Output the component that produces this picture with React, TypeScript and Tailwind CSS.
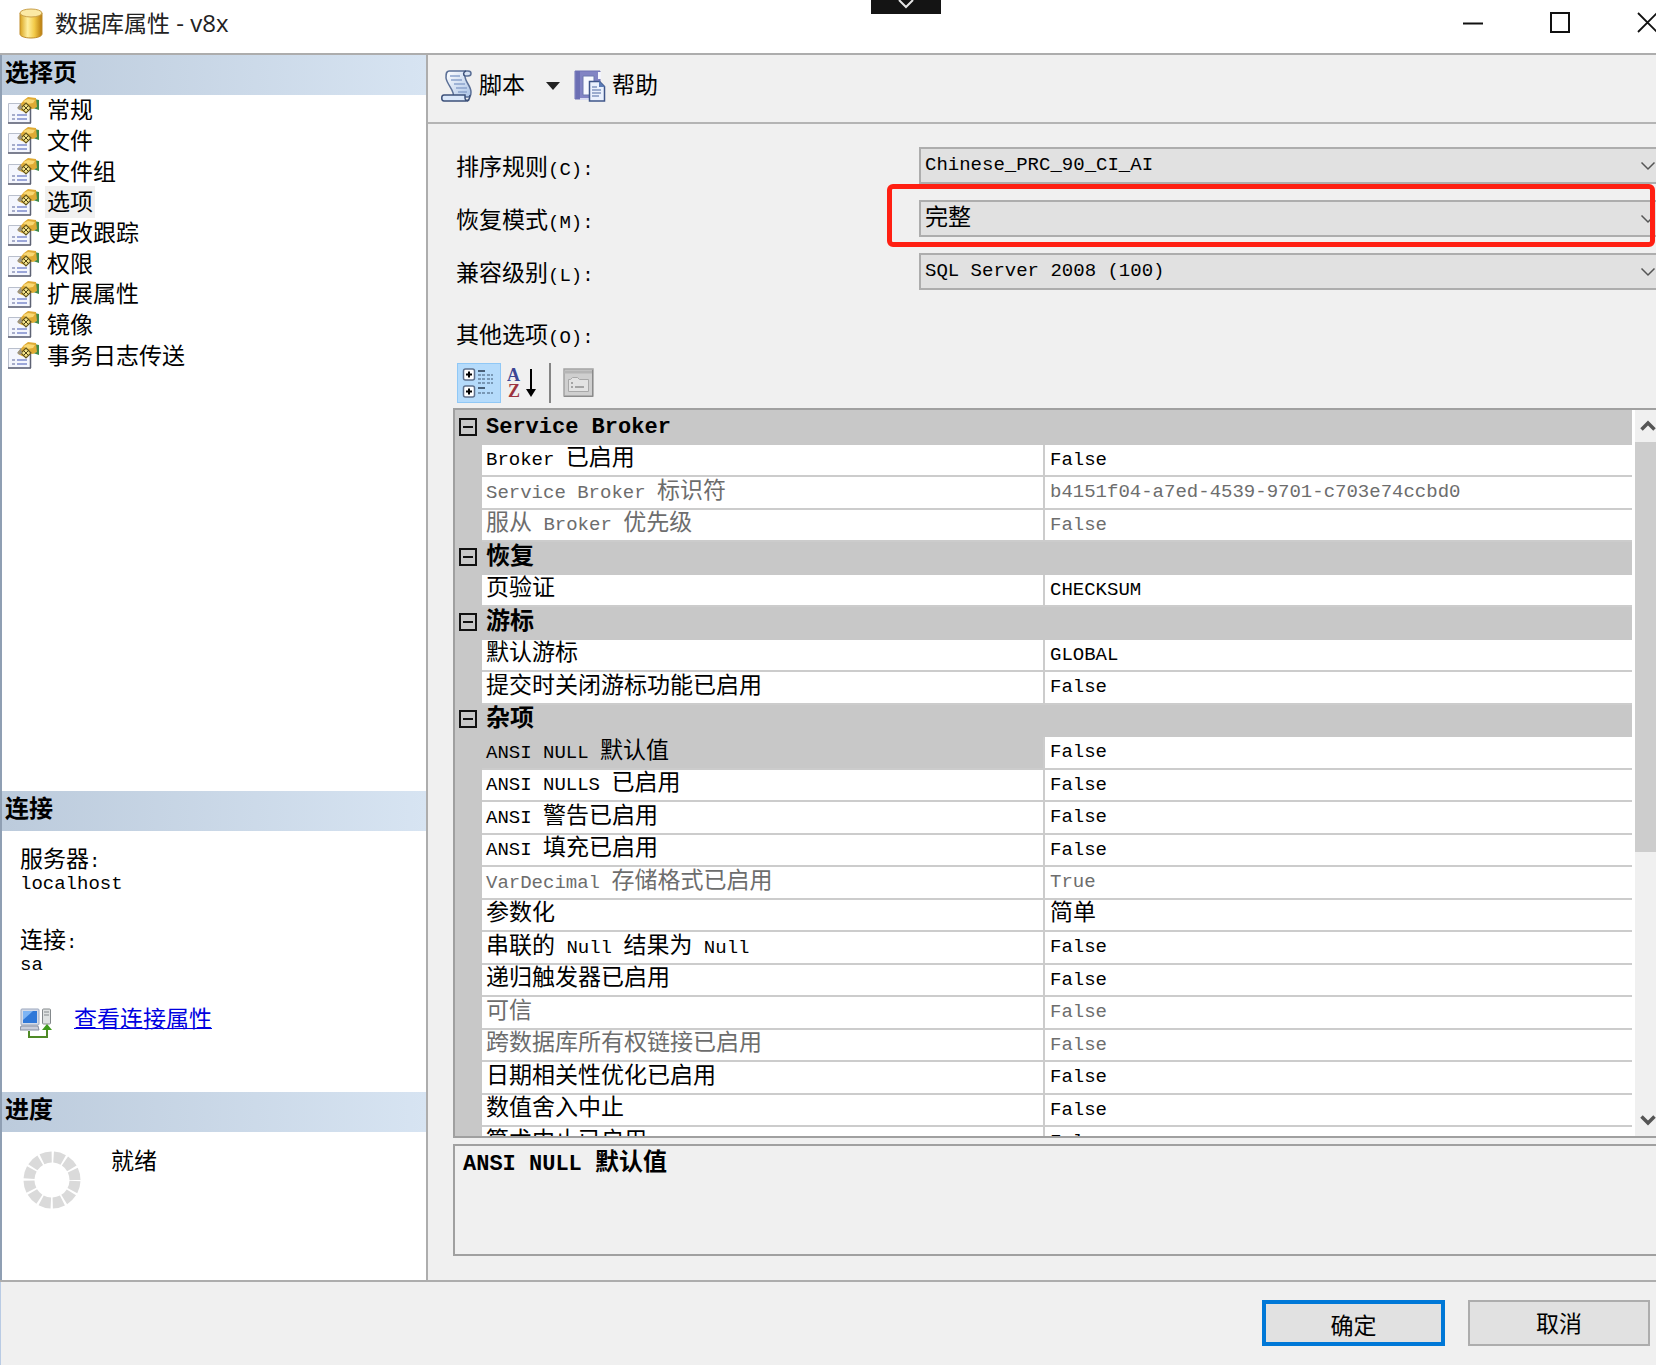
import { useState } from 'react'
import type { ReactNode } from 'react'

type Row = { name: string; value: string; readOnly?: boolean }
type Group = { title: string; rows: Row[] }

const PAGES = ['常规', '文件', '文件组', '选项', '更改跟踪', '权限', '扩展属性', '镜像', '事务日志传送']

const GROUPS: Group[] = [
  {
    title: 'Service Broker',
    rows: [
      { name: 'Broker 已启用', value: 'False' },
      { name: 'Service Broker 标识符', value: 'b4151f04-a7ed-4539-9701-c703e74ccbd0', readOnly: true },
      { name: '服从 Broker 优先级', value: 'False', readOnly: true },
    ],
  },
  { title: '恢复', rows: [{ name: '页验证', value: 'CHECKSUM' }] },
  {
    title: '游标',
    rows: [
      { name: '默认游标', value: 'GLOBAL' },
      { name: '提交时关闭游标功能已启用', value: 'False' },
    ],
  },
  {
    title: '杂项',
    rows: [
      { name: 'ANSI NULL 默认值', value: 'False' },
      { name: 'ANSI NULLS 已启用', value: 'False' },
      { name: 'ANSI 警告已启用', value: 'False' },
      { name: 'ANSI 填充已启用', value: 'False' },
      { name: 'VarDecimal 存储格式已启用', value: 'True', readOnly: true },
      { name: '参数化', value: '简单' },
      { name: '串联的 Null 结果为 Null', value: 'False' },
      { name: '递归触发器已启用', value: 'False' },
      { name: '可信', value: 'False', readOnly: true },
      { name: '跨数据库所有权链接已启用', value: 'False', readOnly: true },
      { name: '日期相关性优化已启用', value: 'False' },
      { name: '数值舍入中止', value: 'False' },
      { name: '算术中止已启用', value: 'False' },
    ],
  },
]

// Latin runs are monospaced at half the width of a Chinese character
function Text({ children, bold }: { children: string; bold?: boolean }) {
  const latin = bold ? 'text-[22px] font-bold' : 'text-[19px]'
  const han = bold ? 'text-[24px] font-bold' : 'text-[23px]'
  return (
    <span className="whitespace-pre">
      {children
        .split(/([\u4e00-\u9fff]+)/)
        .filter(Boolean)
        .map((part, i) => (
          <span key={i} className={/[\u4e00-\u9fff]/.test(part) ? han : latin}>{part}</span>
        ))}
    </span>
  )
}

function DatabaseIcon() {
  return (
    <svg width="24" height="31" viewBox="0 0 24 31">
      <defs>
        <linearGradient id="db" x1="0" x2="1">
          <stop offset="0" stopColor="#d9a21c" />
          <stop offset="0.35" stopColor="#fff0a0" />
          <stop offset="0.65" stopColor="#f3cb4a" />
          <stop offset="1" stopColor="#b87a0c" />
        </linearGradient>
      </defs>
      <path d="M1 5v21c0 2.400 5 4 11 4s11-1.600 11-4V5z" fill="url(#db)" stroke="#c08d2c" />
      <ellipse cx="12" cy="5" rx="11" ry="4" fill="#fbe9a4" stroke="#c9a04a" />
    </svg>
  )
}

function PageIcon() {
  return (
    <svg width="31" height="27" viewBox="0 0 31 27" className="shrink-0">
      <path d="M.5 6.500h22V26H.5z" fill="#f4f6fd" stroke="#b9bfcc" />
      <path d="M0 26h23M22.500 12v14" stroke="#5d6274" strokeWidth="1.500" />
      <path d="M4 18h3M4 22h3" stroke="#8c94b8" strokeWidth="1.500" />
      <path d="M9 18h10M9 22h10" stroke="#7d8ccb" strokeWidth="1.500" />
      <path d="M26 2l5 1v10l-6-2z" fill="#3f8a4c" />
      <path d="M10 10l6-7 4-3 8 1 1 9-4 2-5-1-3 4-3-1-4-2z" fill="#dfab35" />
      <path d="M15 4l5-2 7 1-2 3-6 1z" fill="#f9d874" />
      <path d="M18 6l5 5-5 5-5-5z" fill="#f4e38a" stroke="#65561c" strokeWidth="1.200" />
      <path d="M15.500 8.500l5 5M20.500 8.500l-5 5" stroke="#4d4217" />
      <path d="M9 11l4-5 1 5-2 2z" fill="#9b9482" />
    </svg>
  )
}

function ScriptIcon() {
  return (
    <svg width="32" height="32" viewBox="0 0 32 32">
      <defs>
        <linearGradient id="scroll" x1="0" x2="1" y2="1">
          <stop offset="0" stopColor="#ffffff" />
          <stop offset="1" stopColor="#a9c2e6" />
        </linearGradient>
      </defs>
      <path d="M8 1h19c4 0 4 5 0 5h-3c0 6 6 10 6 16 0 4-1 5-3 5H12c3-5-6-12-7-19 0-4 0-7 3-7z" fill="url(#scroll)" stroke="#5a6f96" strokeWidth="1.500" />
      <path d="M3 25h21v3c0 2 2 3 4 2-1 1-2 1-3 1H3c-3 0-3-6 0-6z" fill="#dbe8fa" stroke="#3c5079" strokeWidth="1.500" />
      <path d="M24 6c-2-1-2-4 1-5M29 25c0 4-1 5-3 6" stroke="#3c5079" strokeWidth="1.500" fill="none" />
      <path d="M9 6h10M10 10h11M13 14h11M15 18h11M17 22h9" stroke="#8ba3cc" strokeWidth="1.300" />
    </svg>
  )
}

function HelpIcon() {
  return (
    <svg width="32" height="32" viewBox="0 0 32 32">
      <path d="M1 1h25v28H1z" fill="#8284c4" stroke="#6f72b4" />
      <path d="M2 1h4v28H2z" fill="#6c6fb4" />
      <path d="M6 29h12" stroke="#d9dcf2" strokeWidth="2" />
      <path d="M9 6h11v19H9z" fill="#f8faff" stroke="#6d78ae" />
      <path d="M24 2h3v7h-3z" fill="#f3f4fc" />
      <path d="M15.500 11.500h10l5 5V31h-15z" fill="#eaf1fd" stroke="#3f5689" strokeWidth="1.500" />
      <path d="M25 11v6h6z" fill="#5c7cb6" />
      <path d="M18 17h5M18 20h9M18 23h9M18 26h7" stroke="#8195bf" strokeWidth="1.300" />
    </svg>
  )
}

function CategorizedIcon() {
  return (
    <svg width="34" height="32" viewBox="0 0 34 32">
      {[0, 17].map((y) => (
        <g key={y}>
          <rect x="1.500" y={y + 2} width="11" height="11" rx="2" fill="#fff" stroke="#5d708c" strokeWidth="1.500" />
          <path d={`M4 ${y + 7.500}h6M7 ${y + 4.500}v6`} stroke="#000" strokeWidth="2" />
          <path d={`M16 ${y + 4}h7`} stroke="#26374d" strokeWidth="1.500" />
        </g>
      ))}
      <path d="M16 8h7M16 12h7M16 16h7M16 26h7M25 8h6M25 12h6M25 16h6M25 26h6" stroke="#66839f" strokeWidth="1.500" strokeDasharray="3 1" />
    </svg>
  )
}

function SortIcon() {
  return (
    <svg width="30" height="32" viewBox="0 0 30 32" className="font-['Liberation_Serif',serif] text-[18px] font-bold">
      <text x="0" y="14" fill="#3c4693">A</text>
      <text x="1" y="30" fill="#9c3340">Z</text>
      <path d="M24 2v23" stroke="#000" strokeWidth="2" />
      <path d="M19 22h10l-5 8z" fill="#000" />
    </svg>
  )
}

function PropertyPagesIcon() {
  return (
    <svg width="31" height="30" viewBox="0 0 31 30">
      <rect x="1" y="1" width="29" height="27" fill="#cfcfcf" stroke="#a3a3a3" strokeWidth="1.500" />
      <path d="M1 4h29" stroke="#b5b5b5" strokeWidth="3" />
      <path d="M5.500 11.500h2l2-2h5l2 2h9v12h-20z" fill="#e2e2e2" stroke="#a8a8a8" />
      <path d="M8 15h2M8 19h2M12 19h9" stroke="#8e8e8e" strokeWidth="1.500" />
      <path d="M1 28.500h29M29.500 2v27" stroke="#8b8b8b" />
    </svg>
  )
}

function ConnectionIcon() {
  return (
    <svg width="32" height="31" viewBox="0 0 32 31" className="shrink-0">
      <rect x="1" y="1" width="18" height="16" rx="1" fill="#d4dbe8" stroke="#9ba7bd" />
      <rect x="3" y="3" width="14" height="12" fill="#2f78d8" />
      <path d="M3 3h10L3 12z" fill="#7db4f4" />
      <path d="M1 18h17l1 4H0z" fill="#c9cedb" stroke="#858ea1" />
      <rect x="22.500" y="1" width="8" height="15" rx="1" fill="#dfe2e2" stroke="#84898c" />
      <path d="M24 4h5M24 7h5" stroke="#84898c" />
      <path d="M9 23v6h18v-8" stroke="#4f8a26" strokeWidth="2" fill="none" />
      <path d="M22 22l5-6 5 6z" fill="#3f9a1c" />
    </svg>
  )
}

function Spinner() {
  return (
    <svg width="58" height="58" viewBox="0 0 58 58">
      <circle cx="29" cy="29" r="23" fill="none" stroke="#dadada" strokeWidth="11" strokeDasharray="10.040 2" strokeDashoffset="-1" />
    </svg>
  )
}

function Chevron({ up, bold }: { up?: boolean; bold?: boolean }) {
  return (
    <svg width="16" height="12" viewBox="0 0 16 12">
      <path d={up ? 'M1.500 9.500L8 3l6.500 6.500' : 'M1.500 2.500L8 9l6.500-6.500'} fill="none" stroke="#555" strokeWidth={bold ? 3.5 : 1.5} />
    </svg>
  )
}

function SectionHeader({ children }: { children: string }) {
  return (
    <h2 className="h-10 shrink-0 bg-linear-to-r from-[#bccbdc] to-[#d7e4f2] pl-[3px] leading-10">
      <Text bold>{children}</Text>
    </h2>
  )
}

function SelectRow({ id, label, value, children }: { id: string; label: string; value: string; children?: ReactNode }) {
  const size = /[\u4e00-\u9fff]/.test(value) ? 'text-[23px]' : 'text-[19px]'
  return (
    <div className="relative grid grid-cols-[463px_1fr] items-center">
      <label htmlFor={id} className="pt-2 leading-6"><Text>{label}</Text></label>
      <div className="relative">
        <select
          id={id}
          defaultValue={value}
          className={`block h-[37px] w-full appearance-none border-2 border-r-0 border-[#adadad] bg-[#e1e1e1] pl-1 ${size}`}
        >
          <option>{value}</option>
        </select>
        <span className="pointer-events-none absolute inset-y-0 right-0 flex items-center"><Chevron /></span>
      </div>
      {children}
    </div>
  )
}

export default function App() {
  const [page, setPage] = useState('选项')
  const [selected, setSelected] = useState('ANSI NULL 默认值')

  return (
    <div className="flex h-screen flex-col overflow-hidden bg-[#f0f0f0] font-['Liberation_Mono','Noto_Sans_CJK_SC',monospace] text-black">
      {/* 标题栏 */}
      <header className="relative flex h-[55px] shrink-0 items-start justify-between border-b-2 border-[#adadad] bg-white">
        <div className="flex items-center gap-3 pt-[7px] pl-[19px]">
          <DatabaseIcon />
          <h1 className="font-['Open_Sans','Noto_Sans_CJK_SC',sans-serif] text-[23px] leading-8 whitespace-pre text-[#222]">
            数据库属性<span className="text-[24px]"> - v8x</span>
          </h1>
        </div>
        <div className="flex gap-[67px] pt-3">
          <button aria-label="最小化">
            <svg width="20" height="21" viewBox="0 0 20 21"><path d="M0 11.500h20" stroke="#111" strokeWidth="2" /></svg>
          </button>
          <button aria-label="最大化">
            <svg width="20" height="21" viewBox="0 0 20 21"><rect x="1" y="1" width="18" height="19" fill="none" stroke="#111" strokeWidth="2" /></svg>
          </button>
          <button aria-label="关闭">
            <svg width="19" height="21" viewBox="0 0 19 21"><path d="M1 1l19 19M20 1L1 20" stroke="#111" strokeWidth="1.800" /></svg>
          </button>
        </div>
        <button aria-label="展开连接栏" className="absolute top-0 left-[871px] flex h-3.5 w-[70px] justify-center bg-[#141414]">
          <svg width="18" height="9" viewBox="0 0 18 9"><path d="M2 0l7 7 7-7" fill="none" stroke="#e5e5e5" strokeWidth="2" /></svg>
        </button>
      </header>

      <div className="flex min-h-0 flex-1 border-b-2 border-[#adadad]">
        {/* 左侧 */}
        <aside className="flex w-[428px] shrink-0 flex-col border-r-2 border-l-2 border-r-[#adadad] border-l-[#8f9fb3] bg-white">
          <SectionHeader>选择页</SectionHeader>
          <ul className="grid h-[276px] auto-rows-fr">
            {PAGES.map((name) => (
              <li key={name} className="flex items-center gap-1.5 pl-1.5">
                <PageIcon />
                <button
                  onClick={() => setPage(name)}
                  className={`px-0.5 pt-1.5 leading-6 ${page === name ? 'bg-[#f0f0f0]' : ''}`}
                >
                  <Text>{name}</Text>
                </button>
              </li>
            ))}
          </ul>

          <section className="mt-auto">
            <SectionHeader>连接</SectionHeader>
            <div className="px-[18px] pt-[18px] pb-[53px] leading-6">
              <dl>
                <dt className="h-[23px]"><Text>服务器:</Text></dt>
                <dd className="h-6"><Text>localhost</Text></dd>
                <dt className="mt-[34px] h-[23px]"><Text>连接:</Text></dt>
                <dd className="h-6"><Text>sa</Text></dd>
              </dl>
              <div className="mt-[31px] flex h-[31px] items-center gap-[22px]">
                <ConnectionIcon />
                <a href="#connection" className="pb-1 text-[#0000e0] underline"><Text>查看连接属性</Text></a>
              </div>
            </div>
          </section>

          <section>
            <SectionHeader>进度</SectionHeader>
            <div className="flex h-[148px] gap-[30px] pt-[19px] pl-[21px] leading-6">
              <Spinner />
              <p><Text>就绪</Text></p>
            </div>
          </section>
        </aside>

        {/* 右侧 */}
        <main className="flex min-w-0 flex-1 flex-col">
          <div className="flex h-[69px] shrink-0 items-center border-b-2 border-[#b4b4b4] pb-1.5 pl-[13px]">
            <button className="flex items-center gap-1.5 leading-8">
              <ScriptIcon />
              <span className="pt-1"><Text>脚本</Text></span>
            </button>
            <button aria-label="脚本菜单" className="ml-[21px]">
              <svg width="14" height="8" viewBox="0 0 14 8"><path d="M0 0h14L7 8z" fill="#222" /></svg>
            </button>
            <button className="ml-3.5 flex items-center gap-1.5 leading-8">
              <HelpIcon />
              <span className="pt-1"><Text>帮助</Text></span>
            </button>
          </div>

          <form className="flex flex-col gap-4 pt-[23px] pl-7">
            <SelectRow id="collation" label="排序规则(C):" value="Chinese_PRC_90_CI_AI" />
            <SelectRow id="recovery" label="恢复模式(M):" value="完整">
              {/* 红色标注框 */}
              <div className="pointer-events-none absolute -top-4 right-px -bottom-2.5 left-[431px] rounded-md border-[5px] border-[#ff1f12]" />
            </SelectRow>
            <SelectRow id="compat" label="兼容级别(L):" value="SQL Server 2008 (100)" />
          </form>

          <p className="mt-[31px] pl-7 leading-8"><Text>其他选项(O):</Text></p>
          <div className="mt-2 flex h-10 shrink-0 items-center pl-[29px]">
            <button aria-label="按分类顺序" className="flex h-10 w-11 items-center justify-center border border-[#90c8f6] bg-[#b5dbfb]">
              <CategorizedIcon />
            </button>
            <button aria-label="字母顺序" className="ml-1.5"><SortIcon /></button>
            <span className="ml-3 h-10 w-0.5 bg-[#858585]" />
            <button aria-label="属性页" disabled className="ml-3"><PropertyPagesIcon /></button>
          </div>

          {/* 属性网格 */}
          <div className="mt-[5px] ml-[25px] flex min-h-0 flex-1 border-2 border-r-0 border-[#a0a0a0] bg-white">
            <div className="min-w-0 flex-1 overflow-hidden bg-[#c8c8c8] pt-0.5">
              <table className="w-full table-fixed border-separate border-spacing-0 text-left leading-7">
                <colgroup>
                  <col className="w-[27px]" />
                  <col className="w-[563px]" />
                  <col />
                </colgroup>
                <tbody>
                  {GROUPS.flatMap((group) => [
                    <tr key={group.title} className="h-[33px] even:h-8">
                      <td className="p-0 pb-1 pl-1">
                        <button aria-label={`折叠 ${group.title}`} className="block">
                          <svg width="18" height="18" viewBox="0 0 18 18">
                            <rect x="1" y="1" width="16" height="16" fill="none" stroke="#111" strokeWidth="2" />
                            <path d="M4 9h10" stroke="#111" strokeWidth="2" />
                          </svg>
                        </button>
                      </td>
                      <th colSpan={2} className="p-0 pl-1"><Text bold>{group.title}</Text></th>
                    </tr>,
                    ...group.rows.map((row) => (
                      <tr
                        key={row.name}
                        onClick={() => setSelected(row.name)}
                        className={`h-[33px] even:h-8 ${row.readOnly ? 'text-[#6d6d6d]' : ''}`}
                      >
                        <td className="p-0" />
                        <td className={`overflow-hidden border-r-2 border-b-2 border-[#cccccc] p-0 pl-1 ${selected === row.name ? 'bg-[#c8c8c8]' : 'bg-white'}`}>
                          <Text>{row.name}</Text>
                        </td>
                        <td className="overflow-hidden border-b-2 border-[#cccccc] bg-white p-0 pl-[5px]"><Text>{row.value}</Text></td>
                      </tr>
                    )),
                  ])}
                </tbody>
              </table>
            </div>
            <div className="ml-[3px] flex w-[21px] shrink-0 flex-col bg-[#f0f0f0]">
              <button aria-label="向上滚动" className="flex h-8 shrink-0 items-center justify-end"><Chevron up bold /></button>
              <div className="min-h-0 flex-1"><div className="h-[62%] bg-[#cdcdcd]" /></div>
              <button aria-label="向下滚动" className="flex h-8 shrink-0 items-center justify-end"><Chevron bold /></button>
            </div>
          </div>

          <div className="mt-1.5 mb-6 ml-[25px] h-[112px] shrink-0 border-2 border-r-0 border-[#a0a0a0] pl-2 leading-9">
            <Text bold>{selected}</Text>
          </div>
        </main>
      </div>

      {/* 底部按钮 */}
      <footer className="flex h-[83px] shrink-0 justify-end gap-[23px] border-l border-[#b9cbe4] pt-[18px] pr-1.5">
        <button className="h-[46px] w-[183px] border-4 border-[#0078d7] bg-[#e1e1e1] pt-2 leading-8"><Text>确定</Text></button>
        <button className="h-[46px] w-[182px] border-2 border-[#adadad] bg-[#e1e1e1] pt-2 leading-8"><Text>取消</Text></button>
      </footer>
    </div>
  )
}
